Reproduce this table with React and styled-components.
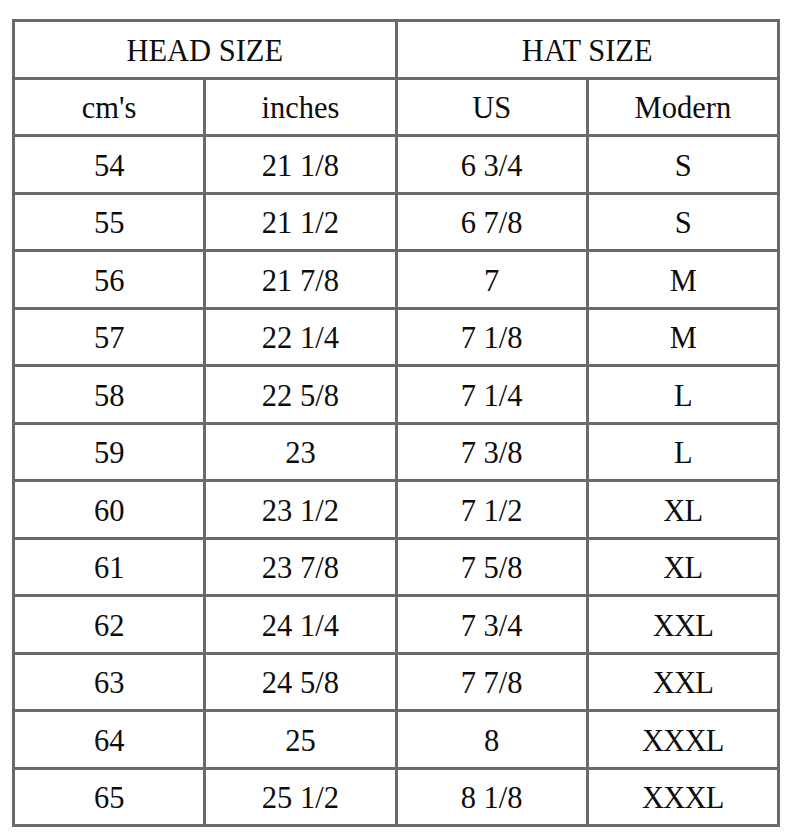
import React from 'react';
import styled, { createGlobalStyle } from 'styled-components';

const GlobalStyle = createGlobalStyle`
    html, body {
        margin: 0;
        padding: 0;
        background: #ffffff;
    }
`;

const Page = styled.div`
    padding: 19px 0 0 12px;
`;

const SizeTable = styled.table`
    border-collapse: collapse;
    width: 768px;
    table-layout: fixed;
    font-family: 'Liberation Serif', 'Times New Roman', serif;
    font-size: 30.5px;
    color: #0d0d0d;
    border: 3px solid #6a6a6a;
`;

const Row = styled.tr`
    height: 57.5px;
`;

const Cell = styled.td`
    border: 3px solid #6a6a6a;
    text-align: center;
    vertical-align: middle;
    padding: 3px 0 0;
    line-height: 1;
    letter-spacing: ${({ $tight }) => ($tight ? '-0.8px' : '0')};
`;

const rows = [
    ['54', '21 1/8', '6 3/4', 'S'],
    ['55', '21 1/2', '6 7/8', 'S'],
    ['56', '21 7/8', '7', 'M'],
    ['57', '22 1/4', '7 1/8', 'M'],
    ['58', '22 5/8', '7 1/4', 'L'],
    ['59', '23', '7 3/8', 'L'],
    ['60', '23 1/2', '7 1/2', 'XL'],
    ['61', '23 7/8', '7 5/8', 'XL'],
    ['62', '24 1/4', '7 3/4', 'XXL'],
    ['63', '24 5/8', '7 7/8', 'XXL'],
    ['64', '25', '8', 'XXXL'],
    ['65', '25 1/2', '8 1/8', 'XXXL'],
];

const App = () => (
    <>
        <GlobalStyle />
        <Page>
            <SizeTable>
                <tbody>
                    <Row>
                        <Cell colSpan={2}>HEAD SIZE</Cell>
                        <Cell colSpan={2}>HAT SIZE</Cell>
                    </Row>
                    <Row>
                        <Cell>cm's</Cell>
                        <Cell>inches</Cell>
                        <Cell>US</Cell>
                        <Cell>Modern</Cell>
                    </Row>
                    {rows.map((r) => (
                        <Row key={r[0]}>
                            {r.map((v, i) => (
                                <Cell key={i} $tight={i === 3}>{v}</Cell>
                            ))}
                        </Row>
                    ))}
                </tbody>
            </SizeTable>
        </Page>
    </>
);

export default App;
